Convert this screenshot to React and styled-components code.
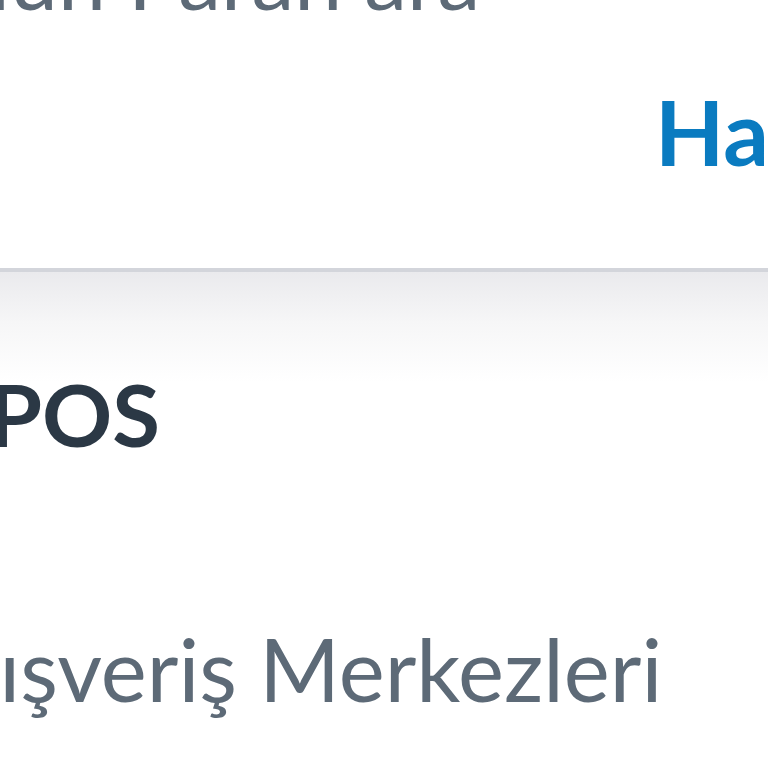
import styled, { createGlobalStyle } from 'styled-components';

const GlobalStyle = createGlobalStyle`
  html, body {
    margin: 0;
    padding: 0;
    background: #ffffff;
  }
  body {
    font-family: Lato, "Noto Sans", sans-serif;
    overflow: hidden;
  }
`;

const Page = styled.div`
  width: 768px;
  height: 768px;
  overflow: hidden;
  display: flex;
  flex-direction: column;
`;

const Header = styled.header`
  display: flex;
  flex-direction: column;
  margin-top: -66px;
  height: 334px;
  border-bottom: 4px solid #d3d5db;
`;

const SearchHint = styled.div`
  font-size: 86px;
  line-height: 86px;
  color: #5d6a77;
  white-space: nowrap;
  margin-left: -113px;
`;

const TabRow = styled.nav`
  display: flex;
  justify-content: flex-end;
  margin-top: 66px;
  margin-right: -238px;
`;

const Tab = styled.a`
  font-size: 90px;
  font-weight: 700;
  color: #0a7bc0;
  text-decoration: none;
  white-space: nowrap;
  line-height: 90px;
`;

const Section = styled.section`
  flex: 1;
  background: linear-gradient(#eaeaed 0px, #f6f6f7 50px, #ffffff 110px);
  display: flex;
  flex-direction: column;
`;

const Title = styled.h2`
  margin: 98px 0 0 -94px;
  font-size: 87px;
  font-weight: 700;
  color: #2b3845;
  line-height: 87px;
  white-space: nowrap;
`;

const Item = styled.div`
  margin: 168px 0 0 -80px;
  font-size: 87px;
  color: #5d6a77;
  line-height: 87px;
  white-space: nowrap;
`;

export default function App() {
  return (
    <Page>
      <GlobalStyle />
      <Header>
        <SearchHint>Bulun Paran ara</SearchHint>
        <TabRow>
          <Tab href="#">Haritalar</Tab>
        </TabRow>
      </Header>
      <Section>
        <Title>MPOS</Title>
        <Item>Alışveriş Merkezleri</Item>
      </Section>
    </Page>
  );
}
